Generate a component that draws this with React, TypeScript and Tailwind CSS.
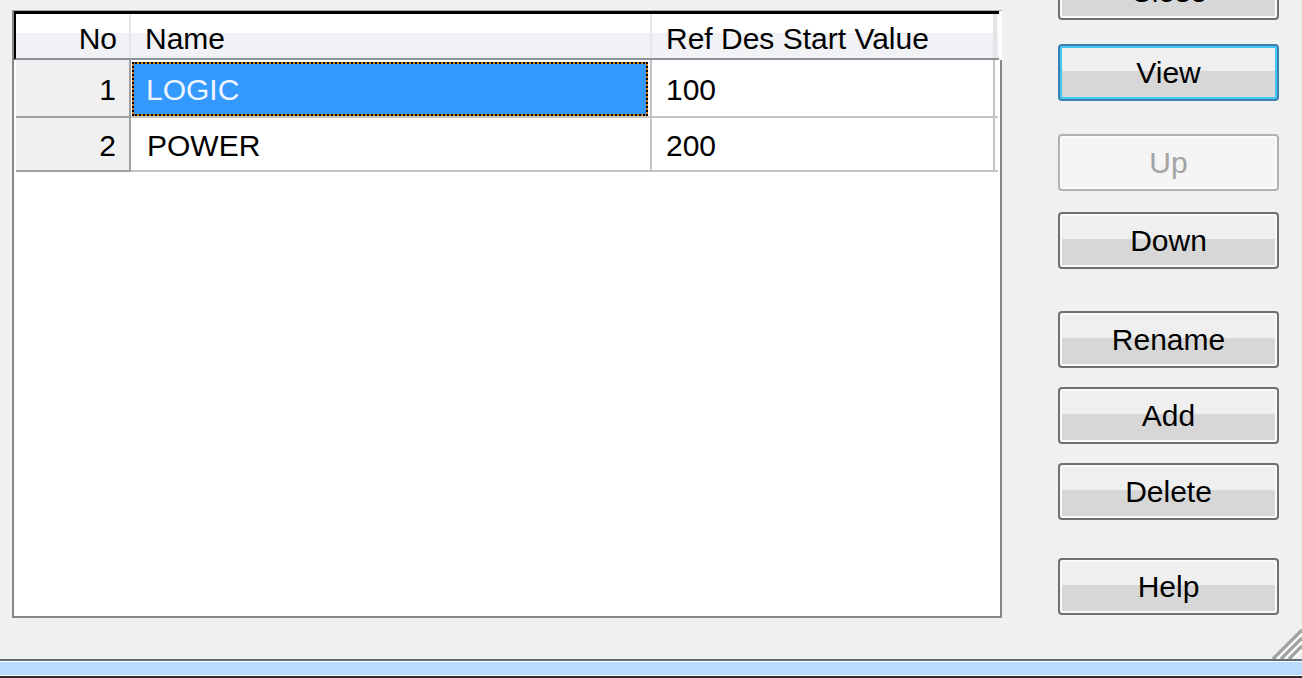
import React from "react";

type Row = { no: number; name: string; start: string };

const rows: Row[] = [
  { no: 1, name: "LOGIC", start: "100" },
  { no: 2, name: "POWER", start: "200" },
];

function DlgButton({
  label,
  className = "",
  focused = false,
  disabled = false,
}: {
  label: string;
  className?: string;
  focused?: boolean;
  disabled?: boolean;
}) {
  if (disabled) {
    return (
      <button
        disabled
        className={`h-[57px] w-[221px] rounded-[4px] border-2 border-[#adb2b5] bg-[#f4f4f4] shadow-[inset_0_0_0_2px_#fcfcfc] text-[30px] text-[#a3a3a3] ${className}`}
      >
        {label}
      </button>
    );
  }
  return (
    <button
      className={`h-[57px] w-[221px] rounded-[4px] border-2 bg-[linear-gradient(#efefef_47%,#d7d7d7_47%)] text-[30px] text-black ${
        focused
          ? "border-[#3c7fb1] shadow-[inset_0_0_0_2px_#42c6f2]"
          : "border-[#707070] shadow-[inset_0_0_0_2px_#f9f9f9]"
      } ${className}`}
    >
      {label}
    </button>
  );
}

function Grip() {
  return (
    <svg width="32" height="32" viewBox="0 0 32 32" className="absolute right-0 bottom-0">
      {[3, 11, 19].map((o) => (
        <g key={o}>
          <line x1={32} y1={o} x2={o} y2={32} stroke="#a3a3a3" strokeWidth={3.5} />
          <line x1={32} y1={o + 4} x2={o + 4} y2={32} stroke="#ffffff" strokeWidth={2} />
        </g>
      ))}
    </svg>
  );
}

export default function App() {
  return (
    <div
      className="flex h-[678px] w-[1302px] flex-col overflow-hidden bg-[#f0f0f0] text-black"
      style={{ fontFamily: '"Liberation Sans", Arial, sans-serif' }}
    >
      {/* Main area */}
      <div className="relative flex h-[659px]">
        {/* Grid */}
        <div className="ml-[12px] mt-[10px] flex h-[608px] w-[990px] flex-col border-t border-l-2 border-b-2 border-[#85888e] border-t-[#a9abae] bg-white">
          {/* Header */}
          <div className="flex h-[49px] w-[985px] border-t-[3px] border-l-2 border-b-2 border-black border-b-[#8e9096] bg-[linear-gradient(#ffffff_19px,#f1f2f6_19px)] text-[30px] leading-none">
            <div className="flex w-[115px] items-center justify-end border-r-2 border-[#e6e7ea] pr-[12px] pt-[6px]">
              No
            </div>
            <div className="flex w-[521px] items-center border-r-2 border-[#e6e7ea] pl-[14px] pt-[6px]">
              Name
            </div>
            <div className="flex w-[341px] items-center pl-[14px] pt-[6px]">
              Ref Des Start Value
            </div>
            <div className="w-[4px] bg-[#e4e4e6]" />
          </div>

          {/* Body */}
          <div className="flex-1 border-r-2 border-[#85888e] pl-[2px]">
            {rows.map((r, i) => (
              <div
                key={r.no}
                className={`flex text-[30px] leading-none ${i === 0 ? "h-[58px]" : "h-[54px]"}`}
              >
                <div className="flex w-[115px] items-center justify-end border-r-2 border-b-2 border-[#a0a0a0] bg-[#f0f0f0] pr-[13px] pt-[3px]">
                  {r.no}
                </div>
                <div className="flex w-[521px] border-r-2 border-b-2 border-[#c4c4c4] pl-[1px]">
                  {i === 0 ? (
                    <div className="mr-[2px] mt-[2px] flex flex-1 items-center border-2 border-[#d07a1a] bg-[#3399ff] pl-[12px] pt-[1px] text-[#eef4ff] outline-2 outline-dotted outline-black -outline-offset-2">
                      {r.name}
                    </div>
                  ) : (
                    <div className="flex flex-1 items-center pl-[15px] pt-[3px]">{r.name}</div>
                  )}
                </div>
                <div className="flex w-[343px] items-center border-r-2 border-b-2 border-[#c4c4c4] pl-[14px] pt-[3px]">
                  {r.start}
                </div>
                <div className="w-[3px] border-b-2 border-[#c4c4c4]" />
              </div>
            ))}
          </div>
        </div>

        {/* Buttons */}
        <div className="ml-[56px] mt-[-37px] flex flex-col">
          <DlgButton label="Close" />
          <DlgButton label="View" focused className="mt-[24px]" />
          <DlgButton label="Up" disabled className="mt-[33px]" />
          <DlgButton label="Down" className="mt-[21px]" />
          <DlgButton label="Rename" className="mt-[42px]" />
          <DlgButton label="Add" className="mt-[19px]" />
          <DlgButton label="Delete" className="mt-[19px]" />
          <DlgButton label="Help" className="mt-[38px]" />
        </div>

        <Grip />
      </div>

      {/* Bottom strip */}
      <div className="h-[2px] bg-[#5f6b7a]" />
      <div className="h-[1px] bg-white" />
      <div className="h-[13px] bg-[#b9dbfd]" />
      <div className="h-[1px] bg-white" />
      <div className="h-[2px] bg-[#2d2d2d]" />
    </div>
  );
}
